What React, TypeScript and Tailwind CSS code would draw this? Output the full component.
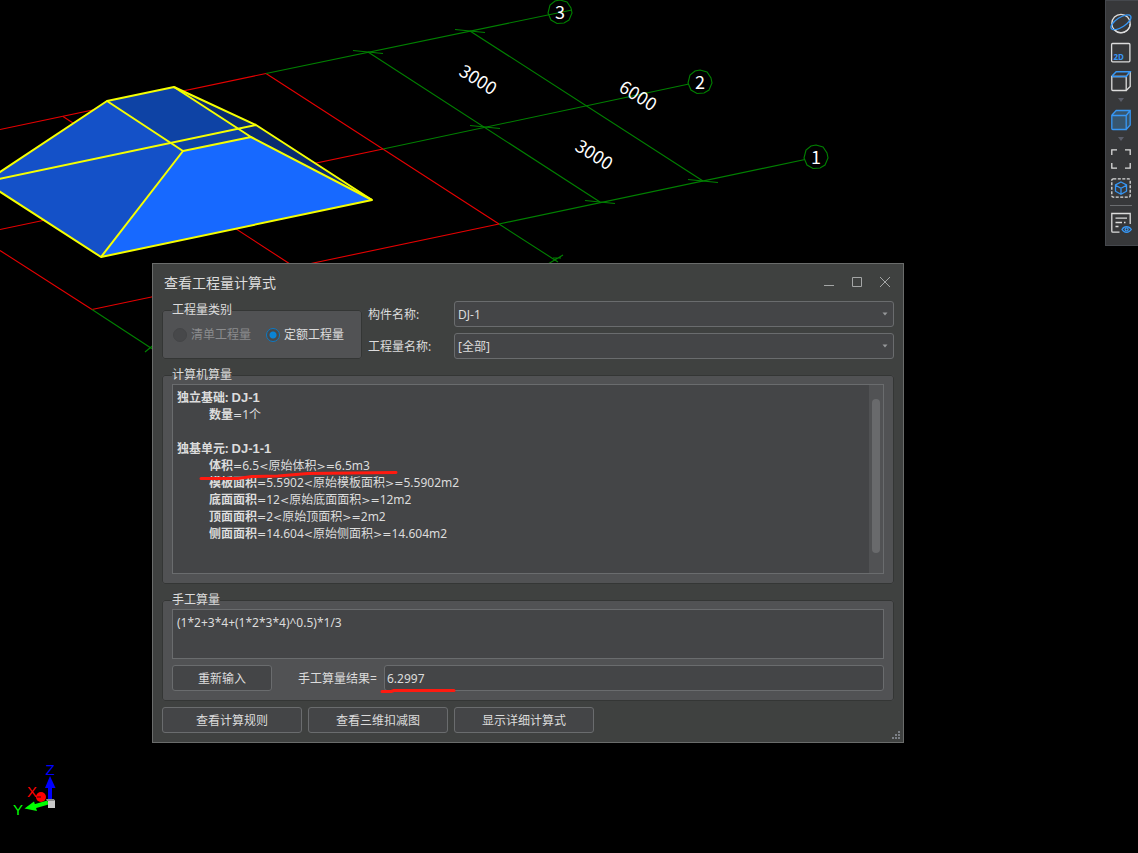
import type { ReactNode } from "react";

const font = "font-['Noto_Sans','Noto_Sans_CJK_SC',sans-serif]";
const sceneFont = "font-['Noto_Sans_CJK_SC',sans-serif]";

const bubbles = [
  { x: 560, y: 12, label: "3" },
  { x: 700, y: 82, label: "2" },
  { x: 816, y: 157, label: "1" },
];

const dimensions = [
  { x: 478, y: 80, label: "3000" },
  { x: 638, y: 96, label: "6000" },
  { x: 594, y: 155, label: "3000" },
];

const ticks = [
  [368, 52],
  [470, 31],
  [485, 127],
  [600, 202],
  [703, 181],
];

function Scene() {
  return (
    <svg className="absolute left-0 top-0" width="1138" height="853" viewBox="0 0 1138 853" fill="none">
      <g stroke="#e60000" strokeWidth="1.1">
        <path d="M0 129.5L266 73.5M0 229.5L383 149M92 309.5L499 224" />
        <path d="M266 73.5L499 224M63 116.500L290 264M0 250.500L92 309.500" />
      </g>
      <g stroke="#008000" strokeWidth="1.1">
        <path d="M266 73.500L572 10M383 149L689 84M499 224L805 159.500" />
        <path d="M368 52L600 202M470 31L703 181M499 224L558 262M92 309.500L154 350" />
        <path d="M548 264L563 255M553 258h8M145 352L156 343" />
        {ticks.map(([x, y]) => (
          <path key={`${x}-${y}`} d={`M${x - 15} ${y - 1.5}L${x + 15} ${y + 1.5}`} />
        ))}
        {bubbles.map((b) => (
          <path
            key={b.label}
            transform={`translate(${b.x} ${b.y})`}
            d="M0 -12L7 -10L11 -4L12 1L9 8L4 11L-3 11.500L-9 8L-12 1L-10 -7L-5 -11Z"
          />
        ))}
      </g>

      <g fill="#fff" textAnchor="middle" className={sceneFont}>
        {bubbles.map((b) => (
          <text key={b.label} x={b.x} y={b.y + 7} fontSize="18">
            {b.label}
          </text>
        ))}
        {dimensions.map((d) => (
          <text key={`${d.x}`} transform={`translate(${d.x} ${d.y}) rotate(32)`} y="6" fontSize="18">
            {d.label}
          </text>
        ))}
      </g>

      <path fill="#0a2c70" d="M174 87L256 125L372 200L251 137Z" />
      <path fill="#1451c8" d="M107 101L183 151L101 257L-15 182Z" />
      <path fill="#0e43a5" d="M107 101L174 87L251 137L183 151Z" />
      <path fill="#1769ff" d="M183 151L251 137L372 200L101 257Z" />
      <g stroke="#f5ff00" strokeWidth="2" strokeLinejoin="round">
        <path d="M107 101L174 87L251 137L183 151Z" />
        <path d="M-15 182L256 125L372 200L101 257Z" />
        <path d="M-15 182L107 101M174 87L256 125M251 137L372 200M183 151L101 257" />
      </g>

      <circle cx="41" cy="797" r="5" fill="#f00" />
      <path d="M37 797h4" stroke="#a00000" strokeWidth="2" />
      <path d="M48 802.500L34 806.500" stroke="#0f0" strokeWidth="4" />
      <path fill="#0f0" d="M24.500 808.500L34 801.500L37 811Z" />
      <path d="M50 801V786" stroke="#00f" strokeWidth="4" />
      <path fill="#00f" d="M50 776L55.500 788H45Z" />
      <path fill="#c8c8c8" d="M48 800h7v8h-7z" />
      <path fill="#8a8a8a" d="M46 799h8l1 2h-8z" />
      <g className="font-['Liberation_Sans',sans-serif]" fontSize="15" textAnchor="middle">
        <text x="50" y="775" fill="#00f">Z</text>
        <text x="32" y="797" fill="#f00">X</text>
        <text x="18" y="815" fill="#0f0">Y</text>
      </g>
    </svg>
  );
}

function Tool({ label, className = "", children }: { label: string; className?: string; children: ReactNode }) {
  return (
    <button type="button" aria-label={label} className={`block ${className}`}>
      <svg
        width="22"
        height="22"
        viewBox="0 0 22 22"
        fill="none"
        stroke="#dcdcdc"
        strokeWidth="1.3"
        className="overflow-visible"
      >
        {children}
      </svg>
    </button>
  );
}

function ToolArrow({ label }: { label: string }) {
  return (
    <button type="button" aria-label={label} className="mt-1 mb-[5px] block">
      <svg width="8" height="8" viewBox="0 0 8 8">
        <path d="M1 2h6L4 6z" fill="#5b5e6a" />
      </svg>
    </button>
  );
}

function Toolbar() {
  return (
    <aside className="absolute right-0 top-0 flex flex-col items-center border border-r-0 border-[#45484d] bg-[#37383a] pt-[11px] pr-1.5 pb-[11px] pl-1">
      <Tool label="动态观察">
        <circle cx="11" cy="11.500" r="9.200" />
        <ellipse cx="11" cy="10.300" rx="11.500" ry="4.800" transform="rotate(-33 11 10.300)" stroke="#3797f5" />
        <path d="M4.500 18A9.200 9.200 0 0 0 20.200 12" />
      </Tool>
      <Tool label="二维" className="mt-2">
        <rect x="1.600" y="1.500" width="18.300" height="18.300" rx="1" />
        <text x="3.500" y="17.500" fontSize="8" fontWeight="700" stroke="none" fill="#3797f5" className={font}>
          2D
        </text>
      </Tool>
      <Tool label="线框显示" className="mt-1.5">
        <path d="M1.800 6.500h14.400v14H2.800q-1 0-1-1z" />
        <path d="M16.200 20.500l4-4V1.800" />
        <path stroke="#3797f5" strokeWidth="1.500" d="M2 6l4.200-4.300H20L16.200 6.400H2" />
      </Tool>
      <ToolArrow label="线框选项" />
      <Tool label="实体显示">
        <path fill="#37566f" stroke="none" d="M2 6l4-4.500h14.200V16l-4 4.500H2z" />
        <path stroke="#3797f5" d="M1.800 6.500h14.400v14H2.800q-1 0-1-1zM2 6l4.200-4.500h14V16l-4 4.500M16.200 6.500l4-5" />
      </Tool>
      <ToolArrow label="实体选项" />
      <Tool label="全屏">
        <path d="M1.800 7V1.800H7M15 1.800h5.200V7M20.200 15v5.200H15M7 20.200H1.800V15" />
      </Tool>
      <Tool label="局部三维" className="mt-[7px]">
        <rect x="1.800" y="1.800" width="18.400" height="18.400" rx="1.500" strokeDasharray="3 1.500" />
        <path
          stroke="#3797f5"
          d="M11 5l5.500 3v6.200L11 17.300l-5.500-3.100V8zM5.500 8.200L11 11.300l5.500-3.100M11 11.300v6"
        />
      </Tool>
      <hr className="mt-1.5 mb-1.5 w-[22px] border-t border-[#6b6d70]" />
      <Tool label="显示设置">
        <path d="M9.500 20.200H2.800q-1 0-1-1V1.500h18.400V12" />
        <path d="M5.500 6.200h11.500M5.500 10.500h6.500M14 10.500h1.500M5.500 14.500h3" />
        <path
          stroke="#3797f5"
          d="M12 17.500C14 13.600 19 13.600 21.300 17.500C19 21.200 14 21.200 12 17.500Z"
        />
        <circle cx="16.600" cy="17.400" r="1.500" stroke="#3797f5" />
      </Tool>
    </aside>
  );
}

const field = "h-[26px] rounded-[3px] border border-[#6a6c6e] bg-[#444547]";
const group = "rounded-[3px] border border-[#343635] bg-[#515254] px-[9px] pb-[9px]";
const legend = "h-[18px] leading-[18px]";

function PushButton({ children, className }: { children: ReactNode; className: string }) {
  return (
    <button type="button" className={`${field} ${className} shrink-0 pt-0.5 text-center leading-[22px]`}>
      {children}
    </button>
  );
}

function SelectRow({ id, label, value }: { id: string; label: string; value: string }) {
  return (
    <div className="flex items-center">
      <label htmlFor={id} className="w-[86px] shrink-0 pt-0.5">
        {label}
      </label>
      <div className="relative grow">
        <select id={id} className={`${field} block w-full appearance-none pt-0.5 pl-[3px] pr-5 outline-none`}>
          <option>{value}</option>
        </select>
        <svg className="pointer-events-none absolute right-1.5 top-[11px]" width="6" height="4" viewBox="0 0 6 4">
          <path d="M0.500 0.500h5L3 3.500z" fill="#96989a" />
        </svg>
      </div>
    </div>
  );
}

function Choice({ label, checked, disabled }: { label: string; checked?: boolean; disabled?: boolean }) {
  return (
    <label className={`flex items-center gap-1 ${disabled ? "text-[#8b8c8e]" : ""}`}>
      <input
        type="radio"
        name="category"
        defaultChecked={checked}
        disabled={disabled}
        className="size-[14px] appearance-none rounded-full border border-[#0c7ac4] bg-[#47484a] bg-[radial-gradient(circle,#0a84d6_3px,transparent_4px)] disabled:border-[#444547] disabled:bg-none"
      />
      <span className="pt-px">{label}</span>
    </label>
  );
}

function Heading({ name, code }: { name: string; code: string }) {
  return (
    <p className="font-bold">
      {name}: <span className="font-['Liberation_Sans',sans-serif] text-[13px] leading-none">{code}</span>
    </p>
  );
}

function Formula({ name, value }: { name: string; value: string }) {
  return (
    <p className="pl-8">
      <b>{name}</b>
      {value.split(/([=<>])/).map((part, i) =>
        /^[=<>]$/.test(part) ? (
          <span key={i} className="font-['DejaVu_Sans',sans-serif] text-[11px] leading-none">
            {part}
          </span>
        ) : (
          part
        ),
      )}
    </p>
  );
}

const details = [
  ["体积", "=6.5<原始体积>=6.5m3"],
  ["模板面积", "=5.5902<原始模板面积>=5.5902m2"],
  ["底面面积", "=12<原始底面面积>=12m2"],
  ["顶面面积", "=2<原始顶面积>=2m2"],
  ["侧面面积", "=14.604<原始侧面积>=14.604m2"],
];

function Dialog() {
  return (
    <section
      role="dialog"
      aria-label="查看工程量计算式"
      className="absolute left-[152px] top-[263px] w-[752px] border border-[#6a6c6b] bg-[#3f4140] px-[9px] pb-[9px] text-[12px] text-[#dcdcdc]"
    >
      <header className="flex h-[37px] items-center justify-between px-0.5">
        <h1 className="text-[14px] leading-5">查看工程量计算式</h1>
        <div className="flex items-center gap-4 pr-px pb-0.5">
          <button type="button" aria-label="最小化">
            <svg width="12" height="12" viewBox="0 0 12 12" stroke="#a4a6a6">
              <path d="M1 9.500h10" />
            </svg>
          </button>
          <button type="button" aria-label="最大化">
            <svg width="12" height="12" viewBox="0 0 12 12" stroke="#a4a6a6" fill="none">
              <path d="M1.500 1.500h9v9h-9z" />
            </svg>
          </button>
          <button type="button" aria-label="关闭">
            <svg width="12" height="12" viewBox="0 0 12 12" stroke="#a4a6a6">
              <path d="M1 1l10 10M11 1L1 11" />
            </svg>
          </button>
        </div>
      </header>

      <div className="flex gap-1.5">
        <fieldset className={`${group} w-[200px] shrink-0`}>
          <legend className={legend}>工程量类别</legend>
          <div className="flex items-center gap-[15px] pt-1.5 pl-px">
            <Choice label="清单工程量" disabled />
            <Choice label="定额工程量" checked />
          </div>
        </fieldset>
        <div className="flex grow flex-col gap-1.5">
          <SelectRow id="component" label="构件名称:" value="DJ-1" />
          <SelectRow id="quantity" label="工程量名称:" value="[全部]" />
        </div>
      </div>

      <fieldset className={`${group} mt-[7px]`}>
        <legend className={legend}>计算机算量</legend>
        <div className="flex h-[190px] border border-[#6a6c6e] bg-[#444547]">
          <div className="grow px-1 pt-1 leading-[17px]">
            <Heading name="独立基础" code="DJ-1" />
            <Formula name="数量" value="=1个" />
            <br />
            <Heading name="独基单元" code="DJ-1-1" />
            {details.map(([name, value]) => (
              <Formula key={name} name={name} value={value} />
            ))}
          </div>
          <div className="w-[14px] bg-[#515254] px-[3px] pt-[14px]">
            <div className="h-[154px] rounded-full bg-[#696a6c]" />
          </div>
        </div>
      </fieldset>

      <fieldset className={`${group} mt-[7px]`}>
        <legend className={legend}>手工算量</legend>
        <textarea
          aria-label="手工算量"
          defaultValue="(1*2+3*4+(1*2*3*4)^0.5)*1/3"
          className="block h-[50px] w-full resize-none border border-[#6a6c6e] bg-[#444547] px-1 py-1 leading-[17px] outline-none"
        />
        <div className="mt-1.5 flex items-center">
          <PushButton className="w-[100px]">重新输入</PushButton>
          <label htmlFor="result" className="ml-[26px] w-[86px] shrink-0 pt-0.5">
            手工算量结果=
          </label>
          <input id="result" defaultValue="6.2997" className={`${field} min-w-0 grow px-0.5 outline-none`} />
        </div>
      </fieldset>

      <footer className="mt-1.5 flex gap-1.5">
        <PushButton className="w-[140px]">查看计算规则</PushButton>
        <PushButton className="w-[140px]">查看三维扣减图</PushButton>
        <PushButton className="w-[140px]">显示详细计算式</PushButton>
      </footer>
      <svg className="absolute right-[3px] bottom-[3px]" width="8" height="8" viewBox="0 0 8 8" fill="#7b7f86">
        <path d="M6 0h2v2H6zM3 3h2v2H3zM6 3h2v2H6zM0 6h2v2H0zM3 6h2v2H3zM6 6h2v2H6z" />
      </svg>
    </section>
  );
}

function Markup() {
  return (
    <svg
      className="pointer-events-none absolute left-0 top-0"
      width="1138"
      height="853"
      viewBox="0 0 1138 853"
      fill="none"
      stroke="#ff1a10"
      strokeWidth="3"
      strokeLinecap="round"
      strokeLinejoin="round"
    >
      <path d="M201 478.500H238L252 476.500L278 476L308 473.500L396 472.500" />
      <path d="M382 691.500H391L394 690.500L454 690.500" />
    </svg>
  );
}

export default function App() {
  return (
    <main className={`relative min-h-screen overflow-hidden bg-black ${font}`}>
      <Scene />
      <Toolbar />
      <Dialog />
      <Markup />
    </main>
  );
}
